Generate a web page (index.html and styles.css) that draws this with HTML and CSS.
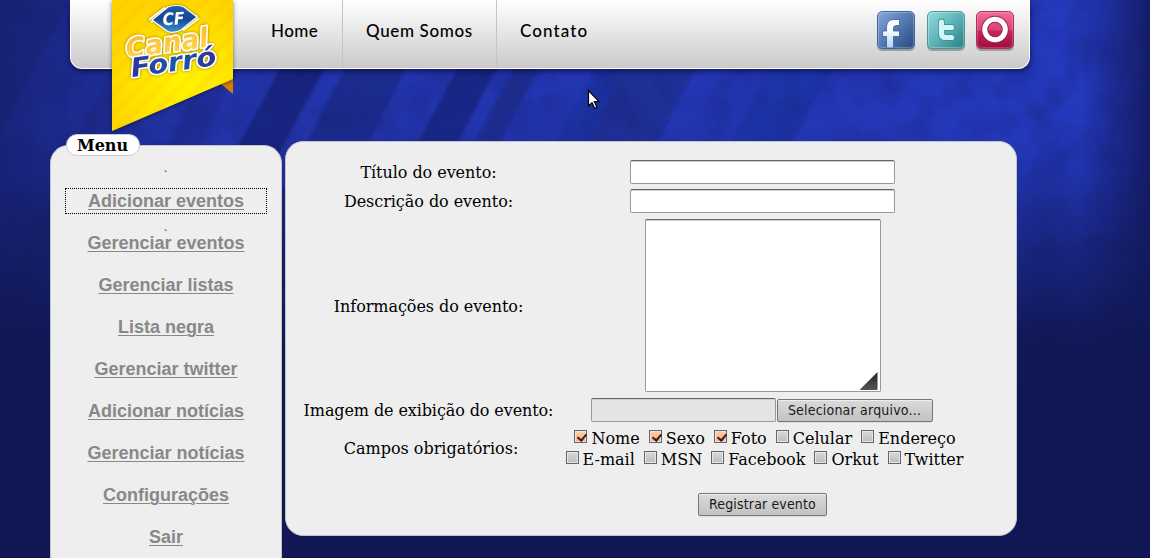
FILE: index.html
```html
<!DOCTYPE html>
<html lang="pt-br">
<head>
<meta charset="utf-8">
<title>Canal Forró</title>
<link rel="stylesheet" href="styles.css">
</head>
<body>
<svg class="backdrop" width="1150" height="558" viewBox="0 0 1150 558" aria-hidden="true">
  <defs>
    <linearGradient id="fade" x1="0" y1="0" x2="0" y2="1">
      <stop offset="0" stop-color="#101754" stop-opacity="0"/>
      <stop offset=".25" stop-color="#101754" stop-opacity=".04"/>
      <stop offset=".42" stop-color="#101754" stop-opacity=".48"/>
      <stop offset=".6" stop-color="#101754" stop-opacity=".96"/>
      <stop offset=".68" stop-color="#101754"/>
    </linearGradient>
    <linearGradient id="sides" x1="0" y1="0" x2="1" y2="0">
      <stop offset="0" stop-color="#141b64" stop-opacity=".6"/>
      <stop offset=".09" stop-color="#141b64" stop-opacity=".25"/>
      <stop offset=".18" stop-color="#141b64" stop-opacity="0"/>
      <stop offset=".94" stop-color="#141b64" stop-opacity="0"/>
      <stop offset="1" stop-color="#141b64" stop-opacity=".95"/>
    </linearGradient>
    <linearGradient id="base" x1="0" y1="0" x2="1" y2="0">
      <stop offset="0" stop-color="#2234a8"/>
      <stop offset=".5" stop-color="#2336b2"/>
      <stop offset=".85" stop-color="#2439bd"/>
      <stop offset="1" stop-color="#2439bf"/>
    </linearGradient>
    <filter id="grain" x="0" y="0" width="100%" height="100%" color-interpolation-filters="sRGB">
      <feTurbulence type="fractalNoise" baseFrequency=".03" numOctaves="6" seed="8"/>
      <feColorMatrix values="0 0 0 0 .09  0 0 0 0 .12  0 0 0 0 .42  2 0 0 0 -.72"/>
    </filter>
    <filter id="soft"><feGaussianBlur stdDeviation="1"/></filter>
  </defs>
  <rect width="1150" height="558" fill="url(#base)"/>
  <g fill="#17206f" filter="url(#soft)">
    <path opacity=".4" d="M0 0H70L-30 190V0Z"/>
    <path opacity=".25" d="M112 69H143L25 300H-5Z"/>
    <path opacity=".3" d="M208 69H238L125 290H95Z"/>
    <path opacity=".65" d="M280 69H324L210 280H165Z"/>
    <path opacity=".5" d="M345 69H406L292 290H230Z"/>
    <path opacity=".6" d="M457 69H496L386 280H346Z"/>
    <path opacity=".45" d="M514 69H538L426 280H400Z"/>
    <path opacity=".2" d="M595 69H626L516 280H484Z"/>
    <path opacity=".4" d="M626 69H695L585 280H516Z"/>
    <path opacity=".2" d="M770 69H830L720 280H660Z"/>
  </g>
  <rect width="1150" height="420" filter="url(#grain)" opacity=".32"/>
  <rect width="1150" height="558" fill="url(#sides)"/>
  <rect width="1150" height="558" fill="url(#fade)"/>
</svg>

<header class="topbar">
  <nav class="nav">
    <a class="nav-home">Home</a>
    <a class="nav-about">Quem Somos</a>
    <a class="nav-contact">Contato</a>
  </nav>
  <div class="social">
    <svg width="40" height="42" viewBox="0 0 40 42">
      <defs><linearGradient id="fb" x1="0" y1="0" x2="1" y2="1"><stop offset="0" stop-color="#86a9dc"/><stop offset=".5" stop-color="#5379b1"/><stop offset="1" stop-color="#244780"/></linearGradient>
      <linearGradient id="ff" x1="0" y1="0" x2="0" y2="1"><stop offset=".3" stop-color="#fff"/><stop offset="1" stop-color="#b4d3f5"/></linearGradient></defs>
      <rect x="1" y="2" width="38" height="38" rx="5" fill="#0004"/>
      <rect x="1.5" y=".5" width="37" height="37" rx="5" fill="url(#fb)" stroke="#3d649f"/>
      <rect x="2.5" y="1.5" width="35" height="35" rx="4" fill="none" stroke="#fff" stroke-opacity=".25"/>
      <path d="M10.500 37V25.500H6.500V20H10.500V16.500Q10.500 8.500 18 8.500H23.500V14.500H20.500Q17.500 14.500 17.500 17V20H23.500V25.500H17.500V37Z" fill="url(#ff)" stroke="#345c98" stroke-width=".8"/>
    </svg>
    <svg width="40" height="42" viewBox="0 0 40 42">
      <defs><linearGradient id="tw" x1="0" y1="0" x2="1" y2="1"><stop offset="0" stop-color="#90dfe0"/><stop offset=".5" stop-color="#5eb2b6"/><stop offset="1" stop-color="#277d82"/></linearGradient></defs>
      <rect x="1" y="2" width="38" height="38" rx="5" fill="#0004"/>
      <rect x="1.500" y=".5" width="37" height="37" rx="5" fill="url(#tw)" stroke="#47969b"/>
      <rect x="2.500" y="1.500" width="35" height="35" rx="4" fill="none" stroke="#fff" stroke-opacity=".3"/>
      <path d="M15.500 11V22Q15.500 26.500 19.500 26.500H25.500M15.500 16.500H25.500" fill="none" stroke="#3f9297" stroke-width="6.800" stroke-linecap="round"/>
      <path d="M15.500 11V22Q15.500 26.500 19.500 26.500H25.500M15.500 16.500H25.500" fill="none" stroke="#cff6f5" stroke-width="5.200" stroke-linecap="round"/>
    </svg>
    <svg width="40" height="42" viewBox="0 0 40 42">
      <defs><linearGradient id="ok" x1="0" y1="0" x2="0" y2="1"><stop offset="0" stop-color="#f0709a"/><stop offset=".5" stop-color="#da4170"/><stop offset=".53" stop-color="#c8265a"/><stop offset="1" stop-color="#9c0d3a"/></linearGradient></defs>
      <rect x="1" y="2" width="38" height="38" rx="5" fill="#0004"/>
      <rect x="1.500" y=".5" width="37" height="37" rx="5" fill="url(#ok)" stroke="#b12c57"/>
      <rect x="2.500" y="1.500" width="35" height="35" rx="4" fill="none" stroke="#fff" stroke-opacity=".2"/>
      <circle cx="20" cy="18.500" r="10.300" fill="none" stroke="#a2234c" stroke-width="7"/>
      <circle cx="20" cy="18.500" r="10.300" fill="none" stroke="#fff" stroke-width="5"/>
    </svg>
  </div>
  <svg class="logo" width="135" height="140" viewBox="105 0 135 140" role="img" aria-label="Canal Forró">
    <defs>
      <radialGradient id="ribbon" cx="185" cy="82" r="85" gradientUnits="userSpaceOnUse"><stop offset="0" stop-color="#fff600"/><stop offset="1" stop-color="#ffd400"/></radialGradient>
      <linearGradient id="gold" x1="0" y1="0" x2="0" y2="1"><stop offset="0" stop-color="#fbb72b"/><stop offset="1" stop-color="#ffd94c"/></linearGradient>
      <linearGradient id="navy" x1="0" y1="0" x2="1" y2="0"><stop offset="0" stop-color="#30359a"/><stop offset=".5" stop-color="#1d57a8"/><stop offset="1" stop-color="#33339a"/></linearGradient>
      <linearGradient id="eye" x1="0" y1="0" x2="0" y2="1"><stop offset="0" stop-color="#1e5fae"/><stop offset=".5" stop-color="#154996"/><stop offset="1" stop-color="#3791d1"/></linearGradient>
      <clipPath id="ribbonClip"><path d="M112 0H233V79L112 131Z"/></clipPath>
      <filter id="glow" x="-20%" y="-20%" width="140%" height="140%"><feDropShadow dx="0" dy="0" stdDeviation="1.500" flood-color="#7a6500" flood-opacity=".8"/></filter>
      <filter id="shade" x="-20%" y="-20%" width="140%" height="140%"><feDropShadow dx="0" dy="1" stdDeviation="2" flood-color="#000" flood-opacity=".5"/></filter>
    </defs>
    <path d="M221 84L233 79V94Z" fill="#dc7b00"/>
    <path d="M112 0H233V79L112 131Z" fill="url(#ribbon)" filter="url(#shade)"/>
    <g clip-path="url(#ribbonClip)" stroke="#ffae00" stroke-opacity=".12" stroke-width="6">
      <path d="M105 22L135 -8M105 42L155 -8M105 62L175 -8M105 82L195 -8M105 102L215 -8M105 122L235 -8M105 142L240 7M125 142L240 27M145 142L240 47"/>
    </g>
    <g filter="url(#glow)">
      <path d="M150 21L166 9M182 29L198 17" stroke="#fff" stroke-width="5"/>
      <path d="M150 21L166 9M182 29L198 17" stroke="#f2b31e" stroke-width="2"/>
      <path d="M152 20L168 7Q177 4 184 7L197 17L181 30Q172 34 167 31Z" fill="url(#eye)" stroke="#fff" stroke-width="1.200"/>
      <text class="logo-cf" transform="translate(163 25.500) rotate(-4)" textLength="22" lengthAdjust="spacingAndGlyphs">CF</text>
      <g class="logo-word">
        <text transform="translate(127 58) rotate(-8)" font-size="27" textLength="83" lengthAdjust="spacingAndGlyphs" fill="url(#gold)">Canal</text>
        <text transform="translate(132 77) rotate(-8)" font-size="26" textLength="86" lengthAdjust="spacingAndGlyphs" fill="url(#navy)">Forró</text>
      </g>
    </g>
  </svg>
</header>

<div class="columns">
  <aside class="sidebar">
    <h2 class="menu-title">Menu</h2>
    <ul class="menu">
      <li class="tick">`</li>
      <li class="focused"><a>Adicionar eventos</a></li>
      <li class="tick tick-second">`</li>
      <li><a>Gerenciar eventos</a></li>
      <li><a>Gerenciar listas</a></li>
      <li><a>Lista negra</a></li>
      <li><a>Gerenciar twitter</a></li>
      <li><a>Adicionar notícias</a></li>
      <li><a>Gerenciar notícias</a></li>
      <li><a>Configurações</a></li>
      <li><a>Sair</a></li>
    </ul>
  </aside>
  <main class="panel">
    <form class="event-form">
      <label>Título do evento:</label>
      <input class="field" type="text">
      <label>Descrição do evento:</label>
      <input class="field" type="text">
      <label class="label-info">Informações do evento:</label>
      <div class="textarea"><span class="grip"></span></div>
      <label class="label-image">Imagem de exibição do evento:</label>
      <div class="file"><span class="file-name"></span><button type="button" class="button file-button">Selecionar arquivo...</button></div>
      <label class="label-required">Campos obrigatórios:</label>
      <div class="checks">
        <div class="check-row check-row-first">
          <label><input type="checkbox" checked>Nome</label>
          <label><input type="checkbox" checked>Sexo</label>
          <label><input type="checkbox" checked>Foto</label>
          <label><input type="checkbox">Celular</label>
          <label><input type="checkbox">Endereço</label>
        </div>
        <div class="check-row">
          <label><input type="checkbox">E-mail</label>
          <label><input type="checkbox">MSN</label>
          <label><input type="checkbox">Facebook</label>
          <label><input type="checkbox">Orkut</label>
          <label><input type="checkbox">Twitter</label>
        </div>
      </div>
      <button type="button" class="button submit">Registrar evento</button>
    </form>
  </main>
</div>
<svg class="pointer" width="14" height="22" viewBox="0 0 14 22"><path d="M1.500 1.500V17L5 13.700L7.800 19.500L10 18.400L7.300 12.700H12Z" fill="#fff" stroke="#000" stroke-width="1.200"/></svg>
</body>
</html>
```
FILE: styles.css
```css
* { box-sizing: border-box; }
body {
  margin: 0;
  width: 1150px;
  height: 558px;
  overflow: hidden;
  position: relative;
  background: #101754;
  font: 16px "DejaVu Serif", serif;
  color: #000;
}
.backdrop { position: absolute; top: 0; left: 0; z-index: -1; }

.topbar {
  position: relative;
  display: flex;
  justify-content: space-between;
  width: 960px;
  height: 69px;
  margin-left: 70px;
  border: solid #fff;
  border-width: 0 1px 1px;
  border-radius: 0 0 12px 12px;
  background: linear-gradient(#fff, #cacaca);
  box-shadow: 0 2px 6px rgba(0, 0, 30, .6);
}
.nav { display: flex; margin-left: 177px; font: 500 17px/61px "Lato", sans-serif; }
.nav a { padding-left: 23px; white-space: nowrap; }
.nav a + a { border-left: 1px solid #c4c4c4; }
.nav-home { width: 94px; letter-spacing: .4px; }
.nav-about { width: 154px; letter-spacing: .65px; }
.nav-contact { letter-spacing: 1.1px; }
.social { display: flex; gap: 9.500px; padding: 11px 14px 0 0; }
.logo { position: absolute; top: 0; left: 34px; }
.logo-cf { font: italic bold 17px "DejaVu Sans", sans-serif; fill: #fff; }
.logo-word { font-family: "DejaVu Sans", sans-serif; font-weight: bold; font-style: italic; stroke: #fff; stroke-width: 3px; paint-order: stroke; stroke-linejoin: round; }

.columns { display: flex; align-items: flex-start; gap: 3px; padding: 72px 0 0 50px; }
.sidebar, .panel { background: #eee; border: 1px solid #c4c4c4; border-radius: 18px; }
.sidebar { width: 232px; height: 440px; margin-top: 4px; }
.menu-title {
  width: 74px;
  height: 22px;
  margin: -12px 0 0 15px;
  padding-right: 1px;
  border: 1px solid #ccc;
  border-radius: 11px;
  background: #fff;
  font: bold 16px/21px "DejaVu Serif", serif;
  text-align: center;
}
.menu {
  list-style: none;
  margin: 12px 14px 0;
  padding: 0;
  text-align: center;
  font: bold 18px/26px "Liberation Sans", sans-serif;
}
.menu li { height: 26px; margin-bottom: 16px; }
.menu a { color: #888; text-decoration: underline; text-decoration-thickness: 1px; text-underline-offset: 2px; }
.menu .tick { height: 20px; margin: 0; font: bold 10px/14px "DejaVu Serif", serif; color: #00c; }
.menu .tick-second { height: 16px; line-height: 40px; }
.menu .focused { margin-bottom: 0; outline: 1px dotted #000; outline-offset: -1px; }

.panel { width: 732px; height: 395px; padding: 18px 0 0 18px; }
.event-form {
  display: grid;
  grid-template-columns: 249px 403px;
  grid-template-rows: 24px 5px 24px 6px 173px 6px 24px 5px 42px 23px 24px;
  column-gap: 8px;
  justify-items: center;
  align-items: center;
}
.event-form > label { white-space: nowrap; letter-spacing: -.05px; }
.event-form > :nth-child(-n+2) { grid-row: 1; }
.event-form > :nth-child(n+3):nth-child(-n+4) { grid-row: 3; }
.event-form > :nth-child(n+5):nth-child(-n+6) { grid-row: 5; }
.event-form > :nth-child(n+7):nth-child(-n+8) { grid-row: 7; }
.event-form > :nth-child(n+9):nth-child(-n+10) { grid-row: 9; }
.event-form > .label-info { padding-top: 2px; }
.event-form > .label-image { letter-spacing: -.1px; }
.field, .textarea, .file-name {
  border: 1px solid #999;
  border-top-color: #666;
  border-radius: 2px;
  background: #fff;
  box-shadow: inset 0 1px #ccc;
}
.field { width: 265px; height: 24px; margin: 0; }
.textarea { display: flex; justify-content: flex-end; align-items: flex-end; width: 236px; height: 173px; padding: 1px 2px; }
.grip { width: 18px; height: 18px; background: linear-gradient(#222, #555); clip-path: polygon(100% 0, 100% 100%, 0 100%); }
.file { display: flex; gap: 1px; align-items: center; padding-right: 2px; }
.file-name { width: 185px; height: 24px; background: #e4e4e4; }
.button {
  height: 23px;
  padding: 0 0 2px;
  border: 1px solid #777;
  border-radius: 2px;
  background: linear-gradient(#dadada, #c2c2c2);
  box-shadow: inset 0 1px #eee, 0 1px #ddd;
  font: 14px/18px "DejaVu Sans Condensed", "DejaVu Sans", sans-serif;
  font-stretch: condensed;
  letter-spacing: .2px;
  color: #1a1a1a;
}
.file-button { width: 156px; margin-top: 1px; }
.submit { grid-row: 11; grid-column: 2; width: 129px; margin-top: 1px; letter-spacing: .15px; }
.event-form > .label-required { padding-left: 5px; letter-spacing: 0; }
.checks { padding-left: 4px; }
.check-row { display: flex; justify-content: center; gap: 9px; height: 21px; line-height: 23px; white-space: nowrap; }
.check-row-first { padding-left: 1px; }
.check-row label { display: flex; gap: 4px; }
.check-row input {
  appearance: none;
  width: 13px;
  height: 13px;
  margin: 3px 0 0;
  border: 1px solid #666;
  background: linear-gradient(#d8d8d8, #bdbdbd);
  box-shadow: inset 0 0 0 1px #e6e6e6;
}
.check-row input:checked { background: linear-gradient(#fbd3a8, #f6a983); }
.check-row input:checked::after {
  content: "";
  display: block;
  width: 4px;
  height: 7px;
  margin: 1px 0 0 4px;
  border: solid #4a1c10;
  border-width: 0 2px 2px 0;
  transform: rotate(40deg);
}
.pointer { position: absolute; left: 587px; top: 89px; }
```
